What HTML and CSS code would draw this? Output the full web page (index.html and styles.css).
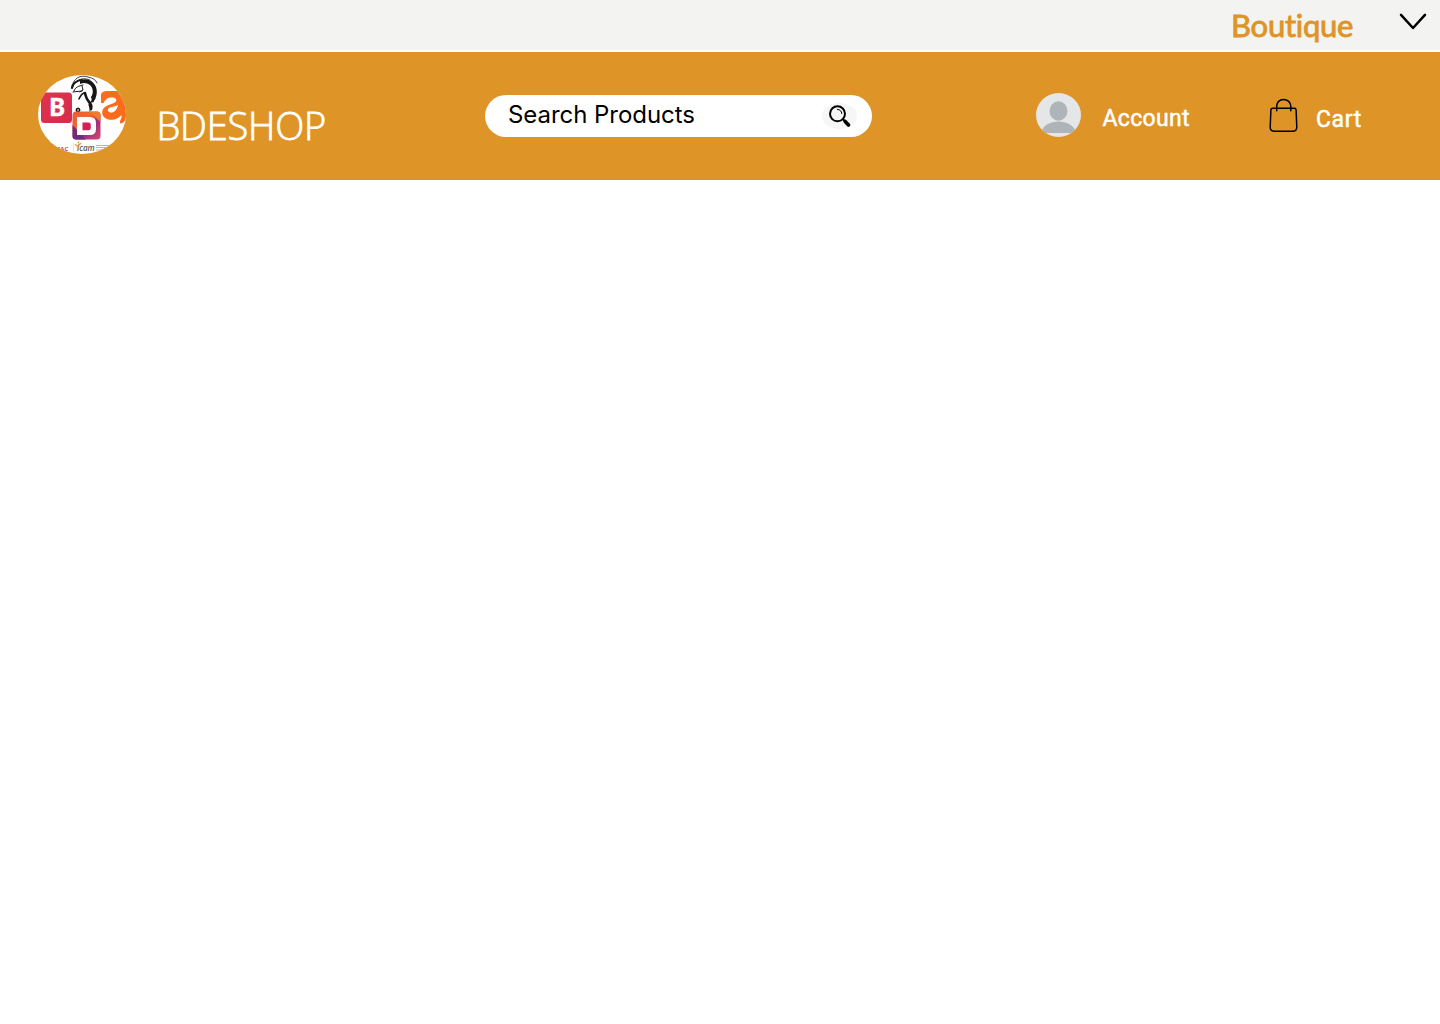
FILE: index.html
```html
<!DOCTYPE html>
<html lang="en">
<head>
<meta charset="utf-8">
<title>BDESHOP</title>
<link rel="stylesheet" href="styles.css">
</head>
<body>
<nav class="topbar">
  <span class="topbar-label">Boutique</span>
  <svg class="chevron" viewBox="0 0 28 18" fill="none" stroke="#000" stroke-width="2.5" stroke-linecap="round" stroke-linejoin="round"><path d="M2 1.800 14 15 26 1.800"/></svg>
</nav>
<header class="header">
  <a class="brand">
    <svg class="logo" viewBox="0 0 88 80">
      <defs>
        <clipPath id="disc"><ellipse cx="44" cy="40.500" rx="44" ry="39.500"/></clipPath>
        <linearGradient id="warm" x1="0" y1="0" x2="1" y2="1"><stop offset="0" stop-color="#ee5a36"/><stop offset=".4" stop-color="#ed6a34"/><stop offset=".6" stop-color="#9a2c7c"/><stop offset="1" stop-color="#d8486a"/></linearGradient>
        <linearGradient id="red" x1="0" y1="0" x2="1" y2="1"><stop offset="0" stop-color="#e0344a"/><stop offset="1" stop-color="#d52c50"/></linearGradient>
      </defs>
      <g clip-path="url(#disc)">
        <rect width="88" height="81" fill="#fff"/>
        <rect x="3" y="18.500" width="31" height="30.500" rx="3.500" fill="url(#red)"/>
        <text class="logo-b" x="11" y="42">B</text>
        <g fill="none" stroke="#161616" stroke-linecap="round">
          <path d="M35 9C38 3 43 1 50 3c5 1 8 3 9 6M38 8c4-4 9-4 14-2" stroke-width=".8"/>
          <path d="M34 14c0-4 5-8 10-8" stroke-width="2.200"/>
          <path d="M36 17c1-4 5-5 9-6M35 18l9-1M44 12l1 4-3 2" stroke-width="1"/>
          <path d="M57 24c-3 2-3 3-6 7" stroke-width="1.300"/>
          <path d="M46 19c-3 1-4 4-5 6" stroke-width="1.500"/>
          <path d="M47 19c1 4 1 6 4 9 2 2 3 4 2 7" stroke-width="2.600"/>
          <path d="M52 30c-2 2 1 4 0 7" stroke-width="1.100"/>
          <circle cx="40" cy="36" r="1.600" stroke-width="1.600" stroke-dasharray=".9 .7"/>
        </g>
        <path d="M42 7c6-4 13-1 16 6 2 6 0 11-3 16-2-2-1-4-2-6 3-4 2-9-1-12-3-2-6-3-10-1z" fill="#161616"/>
        <rect x="34.500" y="37.500" width="28" height="28" rx="3.500" fill="url(#warm)"/>
        <path d="M51 37.500h8q3.500 0 3.500 3.500v7z" fill="#ef7b2f"/>
        <path d="M34.500 51 48 65.500H38q-3.500 0-3.500-3.500z" fill="#6b2c82"/>
        <path d="M39 43h13q6 0 6 6v6q0 6-6 6H39z" fill="#fff"/>
        <path d="M44.500 48.500h6q2.300 0 2.300 2.200v3.400q0 2.200-2.300 2.200h-6z" fill="#d71f55"/>
        <path d="M63 20c1-2 3-3 6-3h19v26c-1 4-2 6-5 6.500-1 0-1.500-1-1-2.500 1-2 2-4 1.500-6-3 4-8 5.500-13 4.500-6-1.500-8-7-5-11 3-4 9-4 12-6.500 2-2 0-5-4-4.500-4 0-6 2-8 5.500h-2.500z" fill="#fb6b1c"/>
        <path d="M80 31c-1 5-4 8-8 7.500-4-1.500-2-5 2-5.500q3.500-.5 6-2z" fill="#fff"/>
        <text class="logo-left" x="19" y="77">SAC</text>
        <path d="M35.500 69v9" stroke="#bbb" stroke-width=".4"/>
        <text class="logo-icam" x="39" y="77">icam</text>
        <path d="M37 70q2 3 4 1l2-2m-3 2v4" fill="none" stroke="#e5a12e" stroke-width="1.300"/><circle cx="40.500" cy="68.500" r=".9" fill="#e5a12e"/>
        <path d="M58 71.500h15M58 73.500h11M58 76h12" stroke="#999" stroke-width=".7"/>
      </g>
    </svg>
    <span class="brand-name">BDESHOP</span>
  </a>
  <div class="search">
    <span class="search-text">Search Products</span>
    <span class="search-button">
      <svg class="search-icon" viewBox="0 0 24 24" fill="none" stroke="#000" stroke-linecap="round"><circle cx="9.500" cy="9.800" r="7.500" stroke-width="2"/><path d="M9.500 5.400a4.500 4.500 0 0 1 4.300 4.200" stroke-width="1"/><path d="m15 15.300 2 2" stroke-width="2"/><path d="m17.200 17.500 3.300 3.500" stroke-width="3.700"/></svg>
    </span>
  </div>
  <a class="account">
    <svg class="avatar" viewBox="0 0 45 44"><defs><clipPath id="face"><ellipse cx="22.500" cy="22" rx="22.500" ry="22"/></clipPath></defs><g clip-path="url(#face)"><rect width="45" height="44" fill="#e4e6e7"/><ellipse cx="22.500" cy="18" rx="9" ry="9.700" fill="#aeb4b7"/><path d="M4 40C8 32 14 28.500 22.500 28.500S37 32 41 40z" fill="#aeb4b7"/></g></svg>
    <span class="account-label">Account</span>
  </a>
  <a class="cart">
    <svg class="bag" viewBox="0 0 30 34" fill="none" stroke="#000" stroke-width="1.500" stroke-linecap="round"><path d="M3.700 10.300h21.600q1.700 0 1.800 1.700l.7 17q0 4.300-4.300 4.300H5.500q-4.300 0-4.300-4.300l.7-17q.1-1.700 1.800-1.700zM7.700 12.800V8.300C7.700 4.300 10.500 1.500 14.500 1.500S21.800 4.300 21.800 8.300v4.500"/></svg>
    <span class="cart-label">Cart</span>
  </a>
</header>
</body>
</html>
```
FILE: styles.css
```css
body { margin: 0; background: #fff; }
.topbar { display: flex; justify-content: flex-end; align-items: flex-start; box-sizing: border-box; height: 52px; padding-right: 13px; background: #f3f3f1; border-bottom: 2px solid #fff; }
.topbar-label { font: 400 31px/38px Lato, sans-serif; font-variant-ligatures: none; -webkit-text-stroke: .9px #df9427; color: #df9427; width: 123px; margin: 6px 45px 0 0; letter-spacing: -.25px; white-space: nowrap; }
.chevron { width: 28px; height: 18px; margin-top: 13px; }
.header { display: flex; align-items: flex-start; height: 128px; background: #df9427; color: #fff; }
.brand { display: flex; align-items: flex-start; box-sizing: border-box; width: 485px; padding: 22px 0 0 38px; }
.logo { width: 88px; height: 80px; }
.brand-name { margin: 25px 0 0 30.500px; font: 300 38px/52px "Open Sans", sans-serif; letter-spacing: -.2px; -webkit-text-stroke: .8px #fff; }
.logo-b { font: 700 24.500px "Noto Sans", sans-serif; fill: #fff; stroke: #fff; stroke-width: .3px; }
.logo-left { font: 700 6px "Open Sans", sans-serif; fill: #b34a63; }
.logo-icam { font: italic 600 8px "Open Sans", sans-serif; fill: #555; }
.search { display: flex; box-sizing: border-box; justify-content: space-between; width: 387px; height: 42px; margin-top: 43px; padding: 0 15px 0 23px; background: #fff; border-radius: 21px; color: #000; }
.search-text { font: 400 24px/40px Inter, sans-serif; letter-spacing: -.05px; }
.search-button { display: flex; justify-content: center; align-items: center; width: 35px; height: 26px; margin-top: 8px; border-radius: 50%; background: #f6f6f6; }
.search-icon { width: 24px; height: 24px; }
.account { display: flex; width: 233px; margin: 41px 0 0 164px; }
.avatar { width: 45px; height: 44px; }
.account-label { margin: 11px 0 0 21.500px; font: 400 23px/30px Roboto, sans-serif; letter-spacing: .3px; -webkit-text-stroke: .5px #fff; }
.cart { display: flex; margin-top: 46px; }
.bag { width: 30px; height: 34px; }
.cart-label { margin: 7px 0 0 17px; font: 400 23px/30px Roboto, sans-serif; letter-spacing: .6px; -webkit-text-stroke: .5px #fff; }
```
